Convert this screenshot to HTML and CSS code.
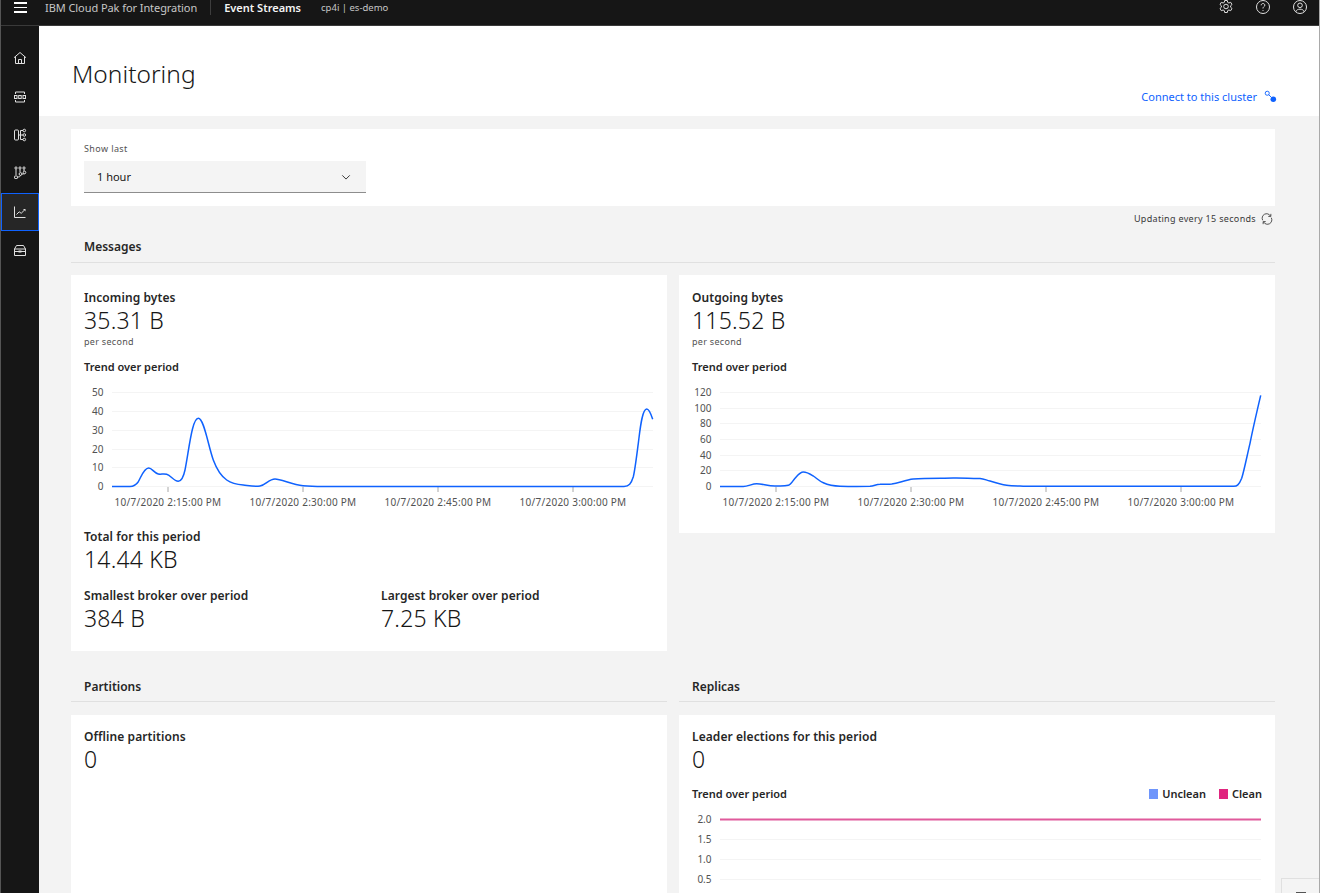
FILE: index.html
```html
<!DOCTYPE html>
<html lang="en">

<head>
    <meta charset="UTF-8">
    <meta name="viewport" content="width=device-width, initial-scale=1.0">
    <title>Monitoring - Event Streams</title>
    <link rel="stylesheet" href="styles.css">
</head>

<body>
    <header class="topbar">
        <button class="menu-btn" aria-label="Menu">
            <span></span><span></span><span></span>
        </button>
        <span class="brand">IBM Cloud Pak for Integration</span>
        <span class="product">Event Streams</span>
        <span class="instance">cp4i | es-demo</span>
        <div class="top-actions">
            <svg class="top-icon" viewBox="0 0 16 16"><path d="M6.7 1.500h2.600l.4 1.900 1.200.6 1.800-.7 1.300 2.200-1.400 1.300v1.400l1.400 1.300-1.300 2.200-1.800-.7-1.200.6-.4 1.900H6.700l-.4-1.900-1.200-.6-1.800.7L2 9.500l1.400-1.300V6.800L2 5.500l1.300-2.200 1.800.7 1.200-.6z"/><circle cx="8" cy="7.500" r="2.300"/></svg>
            <svg class="top-icon" viewBox="0 0 16 16"><circle cx="8" cy="8" r="6.500"/><path d="M6.200 6.300c0-1.100.8-1.800 1.800-1.800s1.800.7 1.800 1.700c0 1.400-1.800 1.500-1.800 3v.3"/><path d="M8 11v.9"/></svg>
            <svg class="top-icon" viewBox="0 0 16 16"><circle cx="8" cy="8" r="6.500"/><circle cx="8" cy="6.300" r="2.300"/><path d="M3.800 12.800c.6-1.800 2-2.600 4.200-2.600s3.600.8 4.200 2.600"/></svg>
        </div>
    </header>

    <div class="shell">
        <nav class="sidenav">
            <a class="nav-item"><svg viewBox="0 0 14 14"><path d="M1 6.700 7 1.500l6 5.200M2.500 5.500v7h9v-7M5.500 12.500V8.500h3v4"/></svg></a>
            <a class="nav-item"><svg viewBox="0 0 14 14"><path d="M2.500 4V2h9v2M2.500 10v2h9v-2"/><rect x="1.500" y="5.500" width="2.500" height="3"/><rect x="5.700" y="5.500" width="2.500" height="3"/><rect x="10" y="5.500" width="2.500" height="3"/></svg></a>
            <a class="nav-item"><svg viewBox="0 0 14 14"><rect x="1.500" y="2" width="4" height="10" rx="1"/><circle cx="11.300" cy="2.500" r="1.300"/><circle cx="11.300" cy="7" r="1.300"/><circle cx="11.300" cy="11.500" r="1.300"/><path d="M5.500 7H10M7.500 2.500V11.500M7.500 2.500H10M7.500 11.500H10"/></svg></a>
            <a class="nav-item"><svg viewBox="0 0 14 14"><circle cx="3" cy="2" r="1.100"/><circle cx="7" cy="2" r="1.100"/><circle cx="11" cy="2" r="1.100"/><path d="M3 3.200v6M7 3.200v3M11 3.200v1.800"/><rect x="1.500" y="10" width="3" height="2.500" rx=".6"/><circle cx="7.500" cy="8" r="1.400"/><circle cx="11.500" cy="6.500" r="1.300"/><path d="M4.500 11c2 0 3-.5 3-1.600M9 8c1.500 0 2.500-.2 2.500-.3"/></svg></a>
            <a class="nav-item active"><svg viewBox="0 0 14 14"><path d="M1.500 1.500v11h11M3.500 9.500l2.700-2.700 2 1.500 3.300-3.300"/><path class="dot" d="M10 4h2.500v2.500z"/></svg></a>
            <a class="nav-item"><svg viewBox="0 0 14 14"><path d="M1.500 6 3.500 2.500h7L12.500 6v6.500h-11zM1.500 6h11M1.500 8.500h11"/><rect class="dot" x="5.500" y="7.500" width="3" height="2"/></svg></a>
        </nav>

        <main class="main">
            <section class="page-head">
                <h1>Monitoring</h1>
                <a class="connect">Connect to this cluster
                    <svg viewBox="0 0 14 14"><circle cx="3.500" cy="3.500" r="2.200" class="ring"/><path class="ring" d="M5 5l3 3"/><circle cx="10" cy="10" r="3" class="solid"/></svg>
                </a>
            </section>

            <div class="content">
                <section class="card filter-card">
                    <label class="field-label">Show last</label>
                    <div class="select">
                        <span>1 hour</span>
                        <svg viewBox="0 0 12 12"><path d="M1.500 4l4.500 4.500L10.500 4"/></svg>
                    </div>
                </section>

                <div class="update-row">
                    <span>Updating every 15 seconds</span>
                    <svg viewBox="0 0 14 14"><path d="M2 8.500A5 5 0 0 1 11 3.500M12 5.500A5 5 0 0 1 3 10.500"/><path d="M11.500 1v3h-3M2.500 13v-3h3"/></svg>
                </div>

                <h2 class="section-title">Messages</h2>

                <div class="two-col">
                    <section class="card metric-card">
                        <h3>Incoming bytes</h3>
                        <div class="big">35.31 B</div>
                        <div class="unit">per second</div>
                        <h4>Trend over period</h4>
                        <svg class="chart" viewBox="0 0 568 118" width="568" height="118">
                            <g class="grid">
                                <path d="M28 7.500H569M28 26.500H569M28 45.500H569M28 64.500H569M28 82.500H569M28 101.500H569"/>
                            </g>
                            <g class="ticks"><path d="M84 102v5M219 102v5M354 102v5M489 102v5"/></g>
                            <g class="ylabels">
                                <text x="19.500" y="11">50</text><text x="19.500" y="30">40</text><text x="19.500" y="49">30</text><text x="19.500" y="68">20</text><text x="19.500" y="86">10</text><text x="19.500" y="105">0</text>
                            </g>
                            <g class="xlabels">
                                <text x="84" y="121">10/7/2020 2:15:00 PM</text><text x="219" y="121">10/7/2020 2:30:00 PM</text><text x="354" y="121">10/7/2020 2:45:00 PM</text><text x="489" y="121">10/7/2020 3:00:00 PM</text>
                            </g>
                            <path class="line" d="M28 101.500H46C50 101.500 52 100 54.300 96.700C57 92 60 83 64.700 83C68 83 70 88 74.300 89C77 89.600 79.500 88.500 82.700 89.300C87 90.500 90 96.500 94.300 96.300C98 96 99.500 92 101 85C105 65 108 33.300 114.300 33.300C120 33.300 124 60 129.300 75C133 85 137 91 142.700 95C147 98 153 99.500 159.300 100C165 100.700 170 102 176 101C182 100 185 94 191 94C197 94 208 99.500 219 100.700C225 101.300 232 101.500 239 101.500H540C545 101.500 547 99 549.300 91.700C551 85 553 68 554.300 58.300C556 45 558 24 562.700 24C565 24 567 29 568.700 34.300"/>
                        </svg>
                        <div class="stat">
                            <h3>Total for this period</h3>
                            <div class="big">14.44 KB</div>
                        </div>
                        <div class="stat-row">
                            <div class="stat">
                                <h3>Smallest broker over period</h3>
                                <div class="big">384 B</div>
                            </div>
                            <div class="stat">
                                <h3>Largest broker over period</h3>
                                <div class="big">7.25 KB</div>
                            </div>
                        </div>
                    </section>

                    <section class="card metric-card short">
                        <h3>Outgoing bytes</h3>
                        <div class="big">115.52 B</div>
                        <div class="unit">per second</div>
                        <h4>Trend over period</h4>
                        <svg class="chart" viewBox="0 0 568 118" width="568" height="118">
                            <g class="grid">
                                <path d="M28 7.500H569M28 23.500H569M28 38.500H569M28 54.500H569M28 70.500H569M28 85.500H569M28 101.500H569"/>
                            </g>
                            <g class="ticks"><path d="M84 102v5M219 102v5M354 102v5M489 102v5"/></g>
                            <g class="ylabels">
                                <text x="19.500" y="11">120</text><text x="19.500" y="27">100</text><text x="19.500" y="42">80</text><text x="19.500" y="58">60</text><text x="19.500" y="74">40</text><text x="19.500" y="89">20</text><text x="19.500" y="105">0</text>
                            </g>
                            <g class="xlabels">
                                <text x="84" y="121">10/7/2020 2:15:00 PM</text><text x="219" y="121">10/7/2020 2:30:00 PM</text><text x="354" y="121">10/7/2020 2:45:00 PM</text><text x="489" y="121">10/7/2020 3:00:00 PM</text>
                            </g>
                            <path class="line" d="M28 101.500H51.300C56 101.500 60 98.700 64.700 98.700C70 98.700 76 101 83 101C88 101 92 101.500 96.300 100.300C99 99.500 101 95.500 103 93.300C106 90 108 87 111.300 87C115 87 118 89 121.300 91C125 93.500 127 96 131.300 97.700C136 99.800 142 101 148 101.200C158 101.500 168 101.500 178 101.300C182 101 184 99.500 188 99.300C192 99 196 99.400 199.700 99C207 98 213 95 221.300 94C234 93 248 93.300 261.300 93C271 92.800 279 93.500 288 93.400C292 93.800 294 95 298 96C304 98 309 99.600 314.700 100.300C320 101 325 101 331.300 101.200H541C545 101.500 547 100 549.700 93.300C552 86 555 71 558 58.300C561 43 565 26 568.700 10.300"/>
                        </svg>
                    </section>
                </div>

                <div class="two-col bottom-col">
                    <div class="col">
                        <h2 class="section-title">Partitions</h2>
                        <section class="card tall-card">
                            <h3>Offline partitions</h3>
                            <div class="big">0</div>
                        </section>
                    </div>
                    <div class="col">
                        <h2 class="section-title">Replicas</h2>
                        <section class="card tall-card">
                            <h3>Leader elections for this period</h3>
                            <div class="big">0</div>
                            <div class="trend-head">
                                <h4>Trend over period</h4>
                                <div class="legend">
                                    <span class="key"><i class="swatch unclean"></i>Unclean</span>
                                    <span class="key"><i class="swatch clean"></i>Clean</span>
                                </div>
                            </div>
                            <svg class="chart" viewBox="0 0 568 92" width="568" height="92">
                                <g class="grid"><path d="M28 38.500H569M28 58.500H569M28 78.500H569"/></g>
                                <g class="ylabels">
                                    <text x="19.500" y="22">2.0</text><text x="19.500" y="42">1.5</text><text x="19.500" y="62">1.0</text><text x="19.500" y="82">0.5</text>
                                </g>
                                <path class="line pink" d="M28 18.500H569"/>
                            </svg>
                        </section>
                    </div>
                </div>
            </div>
        </main>
    </div>
    <div class="corner-tab"><span></span></div>
</body>

</html>
```

FILE: styles.css
```css
* {
    box-sizing: border-box;
}

html,
body {
    height: 100%;
}

body {
    font-family: "Noto Sans", "Open Sans", sans-serif;
    margin: 0;
    color: #161616;
    background-color: #f3f3f3;
    overflow: hidden;
    border-left: 1px solid #555;
    border-right: 1px solid #a9a9a9;
}

h1,
h2,
h3,
h4 {
    margin: 0;
}

.topbar {
    height: 26px;
    background-color: #161616;
    border-bottom: 1px solid #3a3a3a;
    display: flex;
    align-items: flex-start;
    color: #f4f4f4;
    font-size: 11px;
    line-height: 15px;
}

.menu-btn {
    width: 38px;
    height: 15px;
    padding: 0;
    border: 0;
    background: none;
    display: flex;
    flex-direction: column;
    align-items: center;
    justify-content: center;
    gap: 3px;
}

.menu-btn span {
    width: 13px;
    height: 1.500px;
    background-color: #fff;
}

.brand {
    margin-left: 6px;
    padding-right: 13px;
    letter-spacing: -.07px;
    color: #c6c6c6;
    border-right: 1px solid #3d3d3d;
}

.product {
    margin-left: 13px;
    font-weight: 600;
}

.instance {
    margin-left: 20px;
    font-size: 9.500px;
    color: #c6c6c6;
}

.top-actions {
    margin-left: auto;
    display: flex;
    gap: 21px;
    margin-right: 11px;
    margin-top: -1px;
}

.top-icon {
    width: 16px;
    height: 16px;
    fill: none;
    stroke: #e0e0e0;
    stroke-width: 1;
}

.shell {
    display: flex;
    height: calc(100% - 26px);
}

.sidenav {
    width: 38px;
    flex: none;
    background-color: #161616;
    padding-top: 13px;
    display: flex;
    flex-direction: column;
}

.nav-item {
    height: 38.400px;
    flex: none;
    display: flex;
    align-items: center;
    justify-content: center;
}

.nav-item svg {
    width: 14px;
    height: 14px;
    fill: none;
    stroke: #e0e0e0;
    stroke-width: 1;
}

.nav-item .dot {
    fill: #e0e0e0;
    stroke: none;
}

.nav-item.active {
    background-color: #262626;
    outline: 1.500px solid #0f62fe;
    outline-offset: -1.500px;
}

.main {
    flex: 1;
    min-width: 0;
    overflow: hidden;
}

.page-head {
    height: 90px;
    background-color: #fff;
    position: relative;
    padding: 31px 33px;
}

.page-head h1 {
    font-size: 24.500px;
    font-weight: 300;
    line-height: 34px;
}

.connect {
    position: absolute;
    right: 42px;
    bottom: 12px;
    display: flex;
    align-items: center;
    gap: 7px;
    font-size: 11px;
    color: #0f62fe;
}

.connect svg {
    width: 13px;
    height: 13px;
}

.connect .ring {
    fill: none;
    stroke: #0f62fe;
    stroke-width: 1;
}

.connect .solid {
    fill: #0f62fe;
}

.content {
    width: 1236px;
    padding: 13px 0 0 32px;
}

.card {
    background-color: #fff;
}

.filter-card {
    height: 77px;
    padding: 13px;
}

.field-label {
    display: block;
    font-size: 9px;
    line-height: 13px;
    letter-spacing: .4px;
    color: #525252;
    margin-bottom: 6px;
}

.select {
    width: 282px;
    height: 32px;
    background-color: #f4f4f4;
    border-bottom: 1px solid #8d8d8d;
    padding: 0 15px 0 13px;
    display: flex;
    align-items: center;
    justify-content: space-between;
    font-size: 11px;
}

.select svg {
    width: 10px;
    height: 10px;
    fill: none;
    stroke: #393939;
    stroke-width: 1.200;
}

.update-row {
    height: 25px;
    padding-right: 2px;
    display: flex;
    align-items: center;
    justify-content: flex-end;
    gap: 5px;
    font-size: 9px;
    letter-spacing: .32px;
    color: #393939;
}

.update-row svg {
    width: 12px;
    height: 12px;
    fill: none;
    stroke: #393939;
    stroke-width: 1;
}

.section-title {
    font-size: 12px;
    font-weight: 600;
    line-height: 16px;
    color: #262626;
    padding: 8px 13px 7px;
    border-bottom: 1px solid #e0e0e0;
}

.two-col {
    display: grid;
    grid-template-columns: 596px 596px;
    gap: 12px;
    margin-top: 12px;
    align-items: start;
}

.metric-card {
    padding: 15px 13px 20px;
    height: 376px;
}

.metric-card.short {
    height: 258px;
}

h3 {
    font-size: 12px;
    font-weight: 600;
    line-height: 15px;
    letter-spacing: .08px;
    color: #262626;
}

.big {
    margin-top: 2px;
    font-size: 23px;
    font-weight: 300;
    letter-spacing: .2px;
    line-height: 27px;
    color: #161616;
}

.unit {
    font-size: 9px;
    line-height: 16px;
    letter-spacing: .3px;
    color: #525252;
}

h4 {
    font-size: 11px;
    font-weight: 600;
    line-height: 14px;
    color: #262626;
}

.metric-card h4 {
    margin-top: 10px;
}

.chart {
    display: block;
    margin-top: 11px;
    overflow: visible;
}

.grid path {
    fill: none;
    stroke: #f4f4f4;
    stroke-width: 1;
}

.ticks path {
    fill: none;
    stroke: #a8a8a8;
    stroke-width: 1;
}

.ylabels text {
    font-size: 10px;
    fill: #525252;
    text-anchor: end;
}

.xlabels text {
    font-size: 10px;
    letter-spacing: .25px;
    fill: #525252;
    text-anchor: middle;
}

.line {
    fill: none;
    stroke: #0f62fe;
    stroke-width: 1.500;
}

.line.pink {
    stroke: #e05a9c;
    stroke-width: 2;
}

.stat {
    margin-top: 26px;
}

.stat-row {
    display: grid;
    grid-template-columns: 297px 1fr;
}

.stat-row .stat {
    margin-top: 15px;
}

.bottom-col {
    margin-top: 19px;
}

.bottom-col .section-title {
    padding: 9px 13px 6px;
}

.tall-card {
    margin-top: 13px;
    height: 178px;
    padding: 14px 13px 0;
    overflow: hidden;
}

.trend-head {
    display: flex;
    justify-content: space-between;
    align-items: center;
    margin-top: 14px;
}

.legend {
    display: flex;
    gap: 13px;
    font-size: 11px;
    line-height: 14px;
    font-weight: 600;
    color: #262626;
}

.key {
    display: flex;
    align-items: center;
    gap: 4px;
}

.swatch {
    width: 9px;
    height: 10px;
}

.swatch.unclean {
    background-color: #6e95fb;
}

.swatch.clean {
    background-color: #e0257f;
}

.tall-card .chart {
    margin-top: 0;
}

.corner-tab {
    position: absolute;
    right: 1px;
    bottom: 0;
    width: 38px;
    height: 15px;
    background-color: #f4f4f4;
    border: 1px solid #e0e0e0;
    border-bottom: 0;
    border-right: 0;
}

.corner-tab span {
    display: block;
    width: 10px;
    height: 1px;
    margin: 13px auto 0;
    background-color: #555;
}
```
